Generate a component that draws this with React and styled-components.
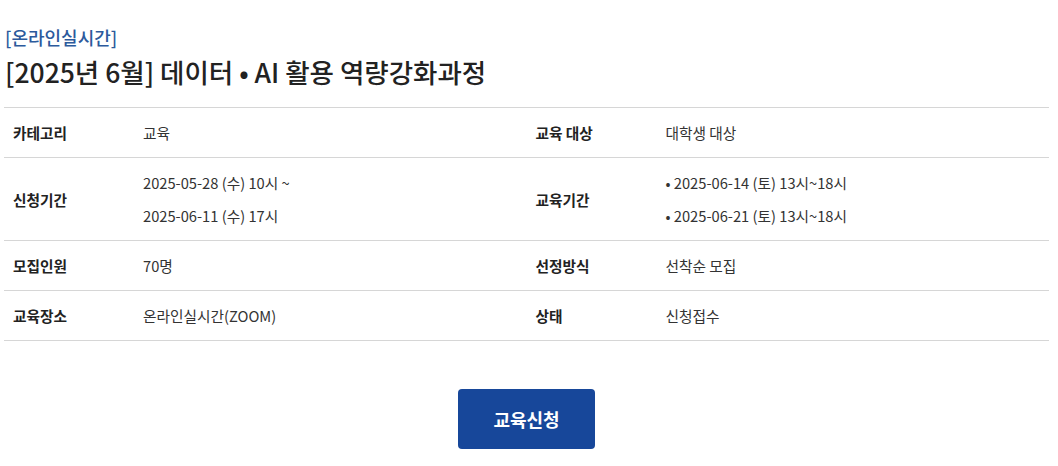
import React from "react";
import styled, { createGlobalStyle } from "styled-components";

const GlobalStyle = createGlobalStyle`
  body {
    margin: 0;
    background: #fff;
    font-family: "Noto Sans CJK KR", "Noto Sans", sans-serif;
    color: #333;
  }
`;

const rows = [
  [
    { label: "카테고리", value: ["교육"] },
    { label: "교육 대상", value: ["대학생 대상"] },
  ],
  [
    { label: "신청기간", value: ["2025-05-28 (수) 10시 ~", "2025-06-11 (수) 17시"] },
    {
      label: "교육기간",
      value: ["2025-06-14 (토) 13시~18시", "2025-06-21 (토) 13시~18시"],
      bullet: true,
    },
  ],
  [
    { label: "모집인원", value: ["70명"] },
    { label: "선정방식", value: ["선착순 모집"] },
  ],
  [
    { label: "교육장소", value: ["온라인실시간(ZOOM)"] },
    { label: "상태", value: ["신청접수"] },
  ],
];

const App = () => {
  return (
    <>
      <GlobalStyle />
      <Page>
        <Header>
          <Category>[온라인실시간]</Category>
          <Title>[2025년 6월] 데이터 • AI 활용 역량강화과정</Title>
        </Header>
        <InfoTable>
          {rows.map((row, i) => (
            <Row key={i}>
              {row.map((cell) => (
                <React.Fragment key={cell.label}>
                  <Label>{cell.label}</Label>
                  <Value>
                    {cell.value.map((line) => (
                      <Line key={line} $bullet={cell.bullet}>
                        {line}
                      </Line>
                    ))}
                  </Value>
                </React.Fragment>
              ))}
            </Row>
          ))}
        </InfoTable>
        <Actions>
          <ApplyButton type="button">교육신청</ApplyButton>
        </Actions>
      </Page>
    </>
  );
};

const Page = styled.div`
  width: 1045px;
  margin-left: 4px;
  padding-top: 24px;
`;

const Header = styled.div`
  padding-left: 1px;
  margin-bottom: 15px;
`;

const Category = styled.div`
  font-size: 18px;
  font-weight: 500;
  line-height: 26px;
  color: #2c5a9c;
`;

const Title = styled.h2`
  margin: 2px 0 0;
  font-size: 26.5px;
  font-weight: 500;
  line-height: 40px;
  color: #222;
`;

const InfoTable = styled.div`
  border-top: 1px solid #d6d6d6;
`;

const Row = styled.div`
  display: grid;
  grid-template-columns: 130px 1fr 130px 1fr;
  border-bottom: 1px solid #d6d6d6;
`;

const Label = styled.div`
  display: flex;
  align-items: center;
  padding: 8px 9px;
  font-size: 14.7px;
  font-weight: 700;
  color: #222;
`;

const Value = styled.div`
  display: flex;
  flex-direction: column;
  justify-content: center;
  padding: 8px 9px;
  font-size: 14.7px;
  color: #333;
`;

const Line = styled.div`
  line-height: 33px;
  &::before {
    content: ${({ $bullet }) => ($bullet ? '"• "' : "none")};
  }
`;

const Actions = styled.div`
  display: flex;
  justify-content: center;
  margin-top: 48px;
`;

const ApplyButton = styled.button`
  width: 137px;
  height: 60px;
  border: 0;
  border-radius: 4px;
  background: #17479a;
  color: #fff;
  font-family: inherit;
  font-size: 18px;
  font-weight: 700;
  cursor: pointer;
`;

export default App;
